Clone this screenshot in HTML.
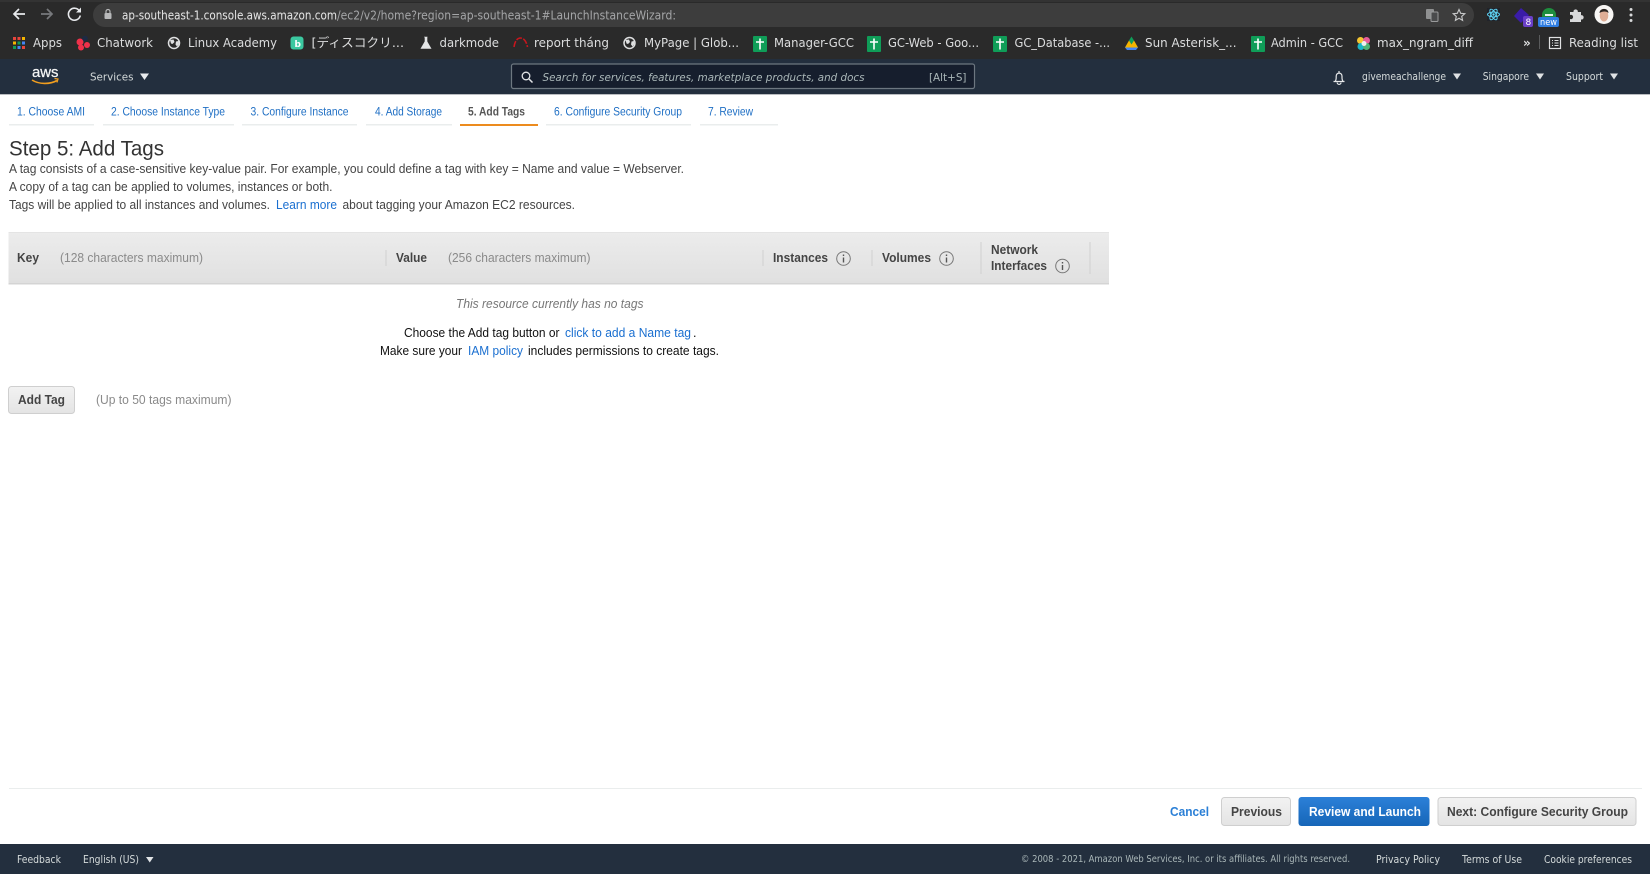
<!DOCTYPE html>
<html lang="en">
<head>
<meta charset="utf-8">
<title>Step 5: Add Tags</title>
<style>
html,body{margin:0;padding:0;width:1650px;height:874px;overflow:hidden;background:#fff}
svg{display:block}
text{white-space:pre}
.lib{font-family:"Liberation Sans",sans-serif}
.dj{font-family:"DejaVu Sans",sans-serif}
.bm{font-family:"DejaVu Sans",sans-serif;font-size:12.3px;fill:#dcddde}
.nav{font-family:"DejaVu Sans",sans-serif;font-size:11px;fill:#d5dbdb}
.tab{font-family:"Liberation Sans",sans-serif;font-size:11.5px;fill:#1f6fc4}
.p{font-family:"Liberation Sans",sans-serif;font-size:12.8px;fill:#444}
.a{font-family:"Liberation Sans",sans-serif;font-size:12.8px;fill:#1a6fd0}
.k{font-family:"Liberation Sans",sans-serif;font-size:12.5px;font-weight:bold;fill:#444}
.g{font-family:"Liberation Sans",sans-serif;font-size:12.5px;fill:#8a8a8a}
.b{font-family:"Liberation Sans",sans-serif;font-size:12.5px;font-weight:bold;fill:#444}
.f{font-family:"DejaVu Sans",sans-serif;font-size:10.5px;fill:#d5dbdb}
</style>
</head>
<body>
<svg width="1650" height="874" viewBox="0 0 1650 874" xmlns="http://www.w3.org/2000/svg">
<defs>
<linearGradient id="th" x1="0" y1="0" x2="0" y2="1"><stop offset="0" stop-color="#ececec"/><stop offset="1" stop-color="#e0e0e0"/></linearGradient>
<linearGradient id="btn" x1="0" y1="0" x2="0" y2="1"><stop offset="0" stop-color="#f2f2f2"/><stop offset="1" stop-color="#e4e4e4"/></linearGradient>
<linearGradient id="pri" x1="0" y1="0" x2="0" y2="1"><stop offset="0" stop-color="#2c80d8"/><stop offset="1" stop-color="#1666b8"/></linearGradient>
</defs>

<!-- Browser chrome -->
<rect width="1650" height="59" fill="#2a2a2a"/>
<rect width="1650" height="2" fill="#333"/>
<rect x="93" y="3" width="1381" height="24" rx="12" fill="#3d3d3d"/>
<path d="M25 14H14M19 9l-5 5 5 5" fill="none" stroke="#e8eaed" stroke-width="1.7"/>
<path d="M41 14h11M47 9l5 5-5 5" fill="none" stroke="#77797c" stroke-width="1.7"/>
<path d="M79.500 11a6 6 0 1 0 .8 4.500" fill="none" stroke="#e8eaed" stroke-width="1.6"/><path d="M81 7.500v5h-5z" fill="#e8eaed"/>
<rect x="104.500" y="13" width="7" height="6" rx="1" fill="#b8b9ba"/><path d="M106 13v-1.500a2 2 0 0 1 4 0V13" fill="none" stroke="#b8b9ba" stroke-width="1.200"/>
<text x="122" y="19.500" class="dj" font-size="12" fill="#e6e6e6" textLength="215" lengthAdjust="spacingAndGlyphs">ap-southeast-1.console.aws.amazon.com</text>
<text x="337" y="19.500" class="dj" font-size="12" fill="#a5a6a8" textLength="339" lengthAdjust="spacingAndGlyphs">/ec2/v2/home?region=ap-southeast-1#LaunchInstanceWizard:</text>
<!-- translate -->
<rect x="1426" y="9" width="8" height="10" rx="1" fill="#8f9091"/><rect x="1431" y="12" width="7" height="9.500" rx="1" fill="#4a4b4c" stroke="#9a9b9c" stroke-width="1"/>
<!-- star -->
<path d="M1459 9.500l1.700 3.800 4.100.4-3.100 2.700.9 4-3.600-2.100-3.600 2.100.9-4-3.100-2.700 4.100-.4z" fill="none" stroke="#c8c9ca" stroke-width="1.100"/>
<!-- react -->
<rect x="1487" y="8" width="13" height="13" fill="#20232a"/>
<g fill="none" stroke="#61dafb" stroke-width=".9"><ellipse cx="1493.500" cy="14.500" rx="6" ry="2.400"/><ellipse cx="1493.500" cy="14.500" rx="6" ry="2.400" transform="rotate(60 1493.500 14.500)"/><ellipse cx="1493.500" cy="14.500" rx="6" ry="2.400" transform="rotate(120 1493.500 14.500)"/></g>
<circle cx="1493.500" cy="14.500" r="1.200" fill="#61dafb"/>
<!-- purple -->
<path d="M1521 8l8 7-8 8-7-7z" fill="#3a1ca8"/>
<rect x="1523" y="16" width="10" height="11" rx="2" fill="#6a3fc8"/>
<text x="1525.500" y="25" class="dj" font-size="9" fill="#fff">8</text>
<!-- green -->
<path d="M1542 18v-3a7 7 0 0 1 14 0v3z" fill="#1e8e3e"/><rect x="1545" y="14" width="8" height="2" fill="#e8f5e9"/>
<rect x="1538" y="17" width="21" height="10" rx="2" fill="#2f7de1"/>
<text x="1540" y="25" class="dj" font-size="8.500" fill="#fff" textLength="17" lengthAdjust="spacingAndGlyphs">new</text>
<!-- puzzle -->
<path d="M1570 12h3.500a2.200 2.200 0 1 1 4.300 0h3.200v3.200a2.200 2.200 0 1 1 0 4.300V22h-11v-3a2.200 2.200 0 1 0 0-4z" fill="#d8d9da"/>
<!-- avatar -->
<circle cx="1604" cy="14.500" r="9.500" fill="#f8f6f4"/>
<ellipse cx="1604" cy="15.500" rx="4.300" ry="6" fill="#dfae96"/><path d="M1599.500 13c0-5.500 9-5.500 9 0-2-2-6-2-9 0z" fill="#2c2622"/>
<g fill="#d8d9da"><circle cx="1631" cy="9.500" r="1.500"/><circle cx="1631" cy="15" r="1.500"/><circle cx="1631" cy="20.500" r="1.500"/></g>

<!-- Bookmarks -->
<rect x="13" y="37" width="3" height="3" fill="#e8453c"/><rect x="17.500" y="37" width="3" height="3" fill="#e8453c"/><rect x="22" y="37" width="3" height="3" fill="#f4b400"/>
<rect x="13" y="41.500" width="3" height="3" fill="#f4b400"/><rect x="17.500" y="41.500" width="3" height="3" fill="#0f9d58"/><rect x="22" y="41.500" width="3" height="3" fill="#4285f4"/>
<rect x="13" y="46" width="3" height="3" fill="#0f9d58"/><rect x="17.500" y="46" width="3" height="3" fill="#4285f4"/><rect x="22" y="46" width="3" height="3" fill="#e8453c"/>
<text x="33" y="47" class="bm" textLength="29" lengthAdjust="spacingAndGlyphs">Apps</text>
<g fill="#f0314a"><circle cx="80" cy="42" r="3.500"/><circle cx="87" cy="45" r="3"/><circle cx="81" cy="47.500" r="3"/></g><circle cx="85" cy="38.500" r="2.800" fill="#1d2a44"/>
<text x="97" y="47" class="bm" textLength="56" lengthAdjust="spacingAndGlyphs">Chatwork</text>
<circle cx="174" cy="43" r="5.500" fill="none" stroke="#dfe0e1" stroke-width="1.500"/><path d="M170 40l3.500-.5 1 2.500-2 2-1.500-.5zM176 41.500l2.500-.5.5 3-2 2.500-1.500-2z" fill="#dfe0e1"/>
<text x="188" y="47" class="bm" textLength="89" lengthAdjust="spacingAndGlyphs">Linux Academy</text>
<rect x="290.500" y="36.500" width="13" height="13" rx="3" fill="#3bc8a0"/>
<text x="294.500" y="47" class="dj" font-size="9" font-weight="bold" fill="#fff">b</text>
<text x="311.500" y="47" font-family="'DejaVu Sans','Noto Sans CJK JP',sans-serif" class="bm" textLength="92.500" lengthAdjust="spacingAndGlyphs">[ディスコクリ...</text>
<path d="M424 37h3.500M425 37.500v4l-4 7h10l-4-7v-4z" fill="#e4e5e6" stroke="#e4e5e6" stroke-width=".6"/>
<text x="439.500" y="47" class="bm" textLength="59.500" lengthAdjust="spacingAndGlyphs">darkmode</text>
<path d="M514 47c1-7 4-9 6.500-9s5.500 2 7 9" fill="none" stroke="#c8161d" stroke-width="1.600" stroke-dasharray="6 1.500"/>
<text x="534" y="47" class="bm" textLength="75" lengthAdjust="spacingAndGlyphs">report tháng</text>
<circle cx="629.500" cy="43" r="5.500" fill="none" stroke="#dfe0e1" stroke-width="1.500"/><path d="M625.500 40l3.500-.5 1 2.500-2 2-1.500-.5zM631.500 41.500l2.500-.5.5 3-2 2.500-1.500-2z" fill="#dfe0e1"/>
<text x="644" y="47" class="bm" textLength="95" lengthAdjust="spacingAndGlyphs">MyPage | Glob...</text>

<rect x="753" y="36" width="14" height="16" rx="1" fill="#0f9d58"/><path d="M756 42h8M760 38.500v11" stroke="#fff" stroke-width="1.600" fill="none"/>
<text x="774" y="47" class="bm" textLength="80" lengthAdjust="spacingAndGlyphs">Manager-GCC</text>
<rect x="867" y="36" width="14" height="16" rx="1" fill="#0f9d58"/><path d="M870 42h8M874 38.500v11" stroke="#fff" stroke-width="1.600" fill="none"/>
<text x="888" y="47" class="bm" textLength="91" lengthAdjust="spacingAndGlyphs">GC-Web - Goo...</text>
<rect x="993" y="36" width="14" height="16" rx="1" fill="#0f9d58"/><path d="M996 42h8M1000 38.500v11" stroke="#fff" stroke-width="1.600" fill="none"/>
<text x="1014.500" y="47" class="bm" textLength="95.500" lengthAdjust="spacingAndGlyphs">GC_Database -...</text>
<path d="M1125 47.500l4-7h5l4 7z" fill="#f4b400"/><path d="M1129 40.500l2.500-4 2.500 4-2.500 4z" fill="#0f9d58"/><path d="M1125 47.500h13l-2 2.500h-9z" fill="#4285f4"/>
<text x="1145" y="47" class="bm" textLength="91.500" lengthAdjust="spacingAndGlyphs">Sun Asterisk_...</text>
<rect x="1251" y="36" width="14" height="16" rx="1" fill="#0f9d58"/><path d="M1254 42h8M1258 38.500v11" stroke="#fff" stroke-width="1.600" fill="none"/>
<text x="1271" y="47" class="bm" textLength="72" lengthAdjust="spacingAndGlyphs">Admin - GCC</text>
<circle cx="1360.500" cy="40.500" r="3.500" fill="#f4c430"/><circle cx="1366.500" cy="40.500" r="3.500" fill="#e85d9a"/><circle cx="1361" cy="46.500" r="3.500" fill="#19b6c8"/><circle cx="1366.500" cy="46.500" r="3.500" fill="#4fb477"/><circle cx="1364" cy="43.500" r="2.500" fill="#eee"/>
<text x="1377" y="47" class="bm" textLength="96" lengthAdjust="spacingAndGlyphs">max_ngram_diff</text>
<text x="1523" y="47" class="dj" font-size="12" fill="#dfe0e1" font-weight="bold">»</text>
<rect x="1539" y="35" width="1" height="14" fill="#5a5b5c"/>
<rect x="1549.500" y="37.500" width="11" height="11" fill="none" stroke="#dfe0e1" stroke-width="1.200"/><path d="M1552 40.500h1M1554.500 40.500h4M1552 43h1M1554.500 43h4M1552 45.500h1M1554.500 45.500h4" stroke="#dfe0e1" stroke-width="1"/>
<text x="1569" y="47" class="bm" textLength="69" lengthAdjust="spacingAndGlyphs">Reading list</text>

<!-- AWS nav -->
<rect y="59" width="1650" height="35" fill="#232f3e"/>
<rect y="94" width="1650" height="1" fill="#b9bcc0"/>
<text x="32" y="77" class="lib" font-size="14.500" fill="#f4f5f5" stroke="#f4f5f5" stroke-width=".25" textLength="26.500" lengthAdjust="spacingAndGlyphs">aws</text>
<path d="M32 80c7 4.500 18 4.500 25 .5" fill="none" stroke="#f19e1f" stroke-width="1.600"/><path d="M54.500 78.500l3.500.5-1 3.500" fill="none" stroke="#f19e1f" stroke-width="1.200"/>
<text x="90" y="80.500" class="nav" font-size="11.500" textLength="43.500" lengthAdjust="spacingAndGlyphs">Services</text>
<path d="M140 73.500h9l-4.500 6.500z" fill="#e9ebed"/>
<rect x="511.500" y="64" width="463" height="24.500" rx="2" fill="#161e2d" stroke="#6d7780" stroke-width="1.200"/>
<circle cx="526" cy="76" r="3.800" fill="none" stroke="#e2e4e6" stroke-width="1.300"/><path d="M529 79l3.500 3.500" stroke="#e2e4e6" stroke-width="1.500"/>
<text x="542.500" y="81" class="dj" font-size="11" font-style="italic" fill="#aab7b8" textLength="322" lengthAdjust="spacingAndGlyphs">Search for services, features, marketplace products, and docs</text>
<text x="929" y="81" class="dj" font-size="11" fill="#aab7b8" textLength="37.500" lengthAdjust="spacingAndGlyphs">[Alt+S]</text>
<path d="M1333.500 81.500h11M1335 81.500c1.500-1.500 1.200-3.500 1.200-5.500a2.900 2.900 0 0 1 5.800 0c0 2-.3 4 1.200 5.500M1337.200 82.500a1.900 1.900 0 0 0 3.800 0M1339 71v2" fill="none" stroke="#e7e9ea" stroke-width="1.200"/>
<text x="1362" y="80" class="nav" textLength="84" lengthAdjust="spacingAndGlyphs">givemeachallenge</text>
<path d="M1453 73.500h8l-4 6z" fill="#dfe2e4"/>
<text x="1482.700" y="80" class="nav" textLength="46.300" lengthAdjust="spacingAndGlyphs">Singapore</text>
<path d="M1536 73.500h8l-4 6z" fill="#dfe2e4"/>
<text x="1566" y="80" class="nav" textLength="37" lengthAdjust="spacingAndGlyphs">Support</text>
<path d="M1610 73.500h8l-4 6z" fill="#dfe2e4"/>

<!-- Wizard tabs -->
<g fill="#eaeded">
<rect x="9" y="124" width="85" height="1.500"/><rect x="103" y="124" width="131" height="1.500"/><rect x="242" y="124" width="115" height="1.500"/><rect x="366" y="124" width="86" height="1.500"/><rect x="546" y="124" width="145" height="1.500"/><rect x="700" y="124" width="78" height="1.500"/>
</g>
<rect x="460" y="124" width="78" height="2" fill="#ec8b1e"/>
<text x="17" y="115.500" class="tab" textLength="68" lengthAdjust="spacingAndGlyphs">1. Choose AMI</text>
<text x="111" y="115.500" class="tab" textLength="114" lengthAdjust="spacingAndGlyphs">2. Choose Instance Type</text>
<text x="250.500" y="115.500" class="tab" textLength="98" lengthAdjust="spacingAndGlyphs">3. Configure Instance</text>
<text x="375" y="115.500" class="tab" textLength="67" lengthAdjust="spacingAndGlyphs">4. Add Storage</text>
<text x="468" y="115.500" class="tab" style="fill:#555;font-weight:bold" textLength="57" lengthAdjust="spacingAndGlyphs">5. Add Tags</text>
<text x="554" y="115.500" class="tab" textLength="128" lengthAdjust="spacingAndGlyphs">6. Configure Security Group</text>
<text x="708" y="115.500" class="tab" textLength="45" lengthAdjust="spacingAndGlyphs">7. Review</text>

<!-- Heading -->
<text x="9" y="155.500" class="lib" font-size="21.500" fill="#333" textLength="155" lengthAdjust="spacingAndGlyphs">Step 5: Add Tags</text>
<text x="9" y="173" class="p" textLength="675" lengthAdjust="spacingAndGlyphs">A tag consists of a case-sensitive key-value pair. For example, you could define a tag with key = Name and value = Webserver.</text>
<text x="9" y="191" class="p" textLength="323.500" lengthAdjust="spacingAndGlyphs">A copy of a tag can be applied to volumes, instances or both.</text>
<text x="9" y="209" class="p" textLength="261" lengthAdjust="spacingAndGlyphs">Tags will be applied to all instances and volumes.</text>
<text x="276" y="209" class="a" textLength="61" lengthAdjust="spacingAndGlyphs">Learn more</text>
<text x="342.500" y="209" class="p" textLength="232.500" lengthAdjust="spacingAndGlyphs">about tagging your Amazon EC2 resources.</text>

<!-- Table header -->
<rect x="8.500" y="232" width="1100.500" height="52" fill="url(#th)"/>
<rect x="8.500" y="232" width="1100.500" height="1" fill="#e4e4e4"/>
<rect x="8.500" y="283" width="1100.500" height="1.500" fill="#d4d4d4"/>
<text x="17" y="262" class="k" textLength="22" lengthAdjust="spacingAndGlyphs">Key</text>
<text x="60" y="262" class="g" textLength="143" lengthAdjust="spacingAndGlyphs">(128 characters maximum)</text>
<rect x="385.500" y="250" width="1" height="16" fill="#d0d0d0"/>
<text x="396" y="262" class="k" textLength="31" lengthAdjust="spacingAndGlyphs">Value</text>
<text x="448" y="262" class="g" textLength="142.500" lengthAdjust="spacingAndGlyphs">(256 characters maximum)</text>
<rect x="762.500" y="250" width="1" height="16" fill="#d0d0d0"/>
<text x="773" y="262" class="k" textLength="55" lengthAdjust="spacingAndGlyphs">Instances</text>
<circle cx="843.500" cy="258.500" r="6.800" fill="none" stroke="#777" stroke-width="1"/><rect x="842.800" y="257.500" width="1.400" height="5" fill="#555"/><rect x="842.800" y="254.500" width="1.400" height="1.500" fill="#555"/>
<rect x="871.500" y="250" width="1" height="16" fill="#d0d0d0"/>
<text x="882" y="262" class="k" textLength="49" lengthAdjust="spacingAndGlyphs">Volumes</text>
<circle cx="946.500" cy="258.500" r="6.800" fill="none" stroke="#777" stroke-width="1"/><rect x="945.800" y="257.500" width="1.400" height="5" fill="#555"/><rect x="945.800" y="254.500" width="1.400" height="1.500" fill="#555"/>
<rect x="980.500" y="242" width="1" height="32" fill="#d0d0d0"/>
<text x="991" y="254" class="k" textLength="47" lengthAdjust="spacingAndGlyphs">Network</text>
<text x="991" y="270" class="k" textLength="56" lengthAdjust="spacingAndGlyphs">Interfaces</text>
<circle cx="1062.500" cy="266" r="6.800" fill="none" stroke="#777" stroke-width="1"/><rect x="1061.800" y="265" width="1.400" height="5" fill="#555"/><rect x="1061.800" y="262" width="1.400" height="1.500" fill="#555"/>
<rect x="1089.500" y="242" width="1" height="32" fill="#d0d0d0"/>

<!-- Empty state -->
<text x="456" y="308" class="lib" font-size="12.500" font-style="italic" fill="#777" textLength="187.500" lengthAdjust="spacingAndGlyphs">This resource currently has no tags</text>
<text x="404" y="337" class="lib" font-size="12.500" fill="#111" textLength="155.500" lengthAdjust="spacingAndGlyphs">Choose the Add tag button or</text>
<text x="565" y="337" class="a" font-size="12.500" textLength="126" lengthAdjust="spacingAndGlyphs">click to add a Name tag</text>
<text x="693" y="337" class="lib" font-size="12.500" fill="#111">.</text>
<text x="380" y="355" class="lib" font-size="12.500" fill="#111" textLength="82" lengthAdjust="spacingAndGlyphs">Make sure your</text>
<text x="468" y="355" class="a" font-size="12.500" textLength="55" lengthAdjust="spacingAndGlyphs">IAM policy</text>
<text x="528" y="355" class="lib" font-size="12.500" fill="#111" textLength="191" lengthAdjust="spacingAndGlyphs">includes permissions to create tags.</text>

<!-- Add tag -->
<rect x="8.500" y="386.500" width="66" height="27" rx="3" fill="url(#btn)" stroke="#cfcfcf"/>
<text x="18" y="404" class="b" textLength="47" lengthAdjust="spacingAndGlyphs">Add Tag</text>
<text x="96" y="404" class="g" textLength="135.500" lengthAdjust="spacingAndGlyphs">(Up to 50 tags maximum)</text>

<!-- Bottom actions -->
<rect x="9" y="788" width="1633" height="1" fill="#eaeded"/>
<text x="1170" y="816" class="b" style="fill:#2a7fd6" textLength="39" lengthAdjust="spacingAndGlyphs">Cancel</text>
<rect x="1221.500" y="797.500" width="69" height="28" rx="3" fill="url(#btn)" stroke="#cfcfcf"/>
<text x="1231" y="816" class="b" textLength="51" lengthAdjust="spacingAndGlyphs">Previous</text>
<rect x="1298.500" y="797" width="131" height="29" rx="3" fill="url(#pri)"/>
<text x="1309" y="816" class="b" style="fill:#fff" textLength="112" lengthAdjust="spacingAndGlyphs">Review and Launch</text>
<rect x="1438" y="797.500" width="198" height="28" rx="3" fill="url(#btn)" stroke="#cfcfcf"/>
<text x="1447" y="816" class="b" textLength="181" lengthAdjust="spacingAndGlyphs">Next: Configure Security Group</text>

<!-- Footer -->
<rect y="844" width="1650" height="30" fill="#232f3e"/>
<text x="17" y="863" class="f" textLength="44" lengthAdjust="spacingAndGlyphs">Feedback</text>
<text x="83" y="863" class="f" textLength="56" lengthAdjust="spacingAndGlyphs">English (US)</text>
<path d="M146 857h7.500l-3.750 5.500z" fill="#e2e5e7"/>
<text x="1021" y="862" class="f" style="fill:#aab7b8;font-size:10px" textLength="329" lengthAdjust="spacingAndGlyphs">© 2008 - 2021, Amazon Web Services, Inc. or its affiliates. All rights reserved.</text>
<text x="1376" y="863" class="f" textLength="64" lengthAdjust="spacingAndGlyphs">Privacy Policy</text>
<text x="1462" y="863" class="f" textLength="60" lengthAdjust="spacingAndGlyphs">Terms of Use</text>
<text x="1544" y="863" class="f" textLength="88" lengthAdjust="spacingAndGlyphs">Cookie preferences</text>
</svg>
</body>
</html>
